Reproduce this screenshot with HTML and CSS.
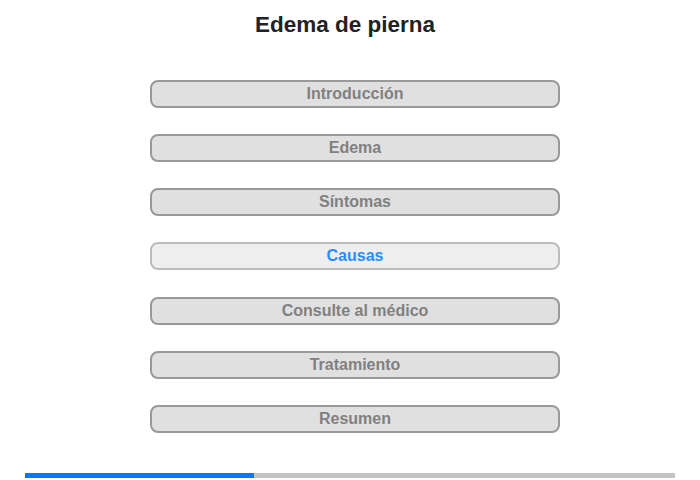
FILE: index.html
```html
<!DOCTYPE html>
<html lang="es">
<head>
<meta charset="utf-8">
<link rel="stylesheet" href="styles.css">
</head>
<body>
<div class="page">
  <h1 class="title">Edema de pierna</h1>
  <nav class="menu">
    <div class="item">Introducción</div>
    <div class="item">Edema</div>
    <div class="item">Síntomas</div>
    <div class="item active">Causas</div>
    <div class="item">Consulte al médico</div>
    <div class="item">Tratamiento</div>
    <div class="item">Resumen</div>
  </nav>
  <div class="progress"><div class="fill" style="width:229px"></div></div>
</div>
</body>
</html>
```
FILE: styles.css
```css
html, body {
  margin: 0;
  padding: 0;
  background: #fff;
  font-family: "Liberation Sans", Arial, sans-serif;
}
.page {
  width: 700px;
  height: 480px;
  display: flex;
  flex-direction: column;
  align-items: center;
}
.title {
  margin: 12px 10px 0 0;
  font-size: 22.5px;
  line-height: 26px;
  font-weight: bold;
  color: #222;
}
.menu {
  margin: 42px 0 0 10px;
  display: flex;
  flex-direction: column;
  gap: 26.17px;
}
.item {
  box-sizing: border-box;
  width: 410px;
  height: 28px;
  border: 2px solid #999;
  border-radius: 8px;
  background: #e0e0e0;
  color: #808080;
  font-weight: bold;
  font-size: 16px;
  line-height: 24px;
  text-align: center;
}
.item.active {
  background: #eee;
  border-color: #bbb;
  color: #2c8cff;
}
.progress {
  margin-top: 40px;
  width: 650px;
  height: 5px;
  background: #c4c4c4;
}
.fill {
  height: 100%;
  background: #007bff;
}
```
